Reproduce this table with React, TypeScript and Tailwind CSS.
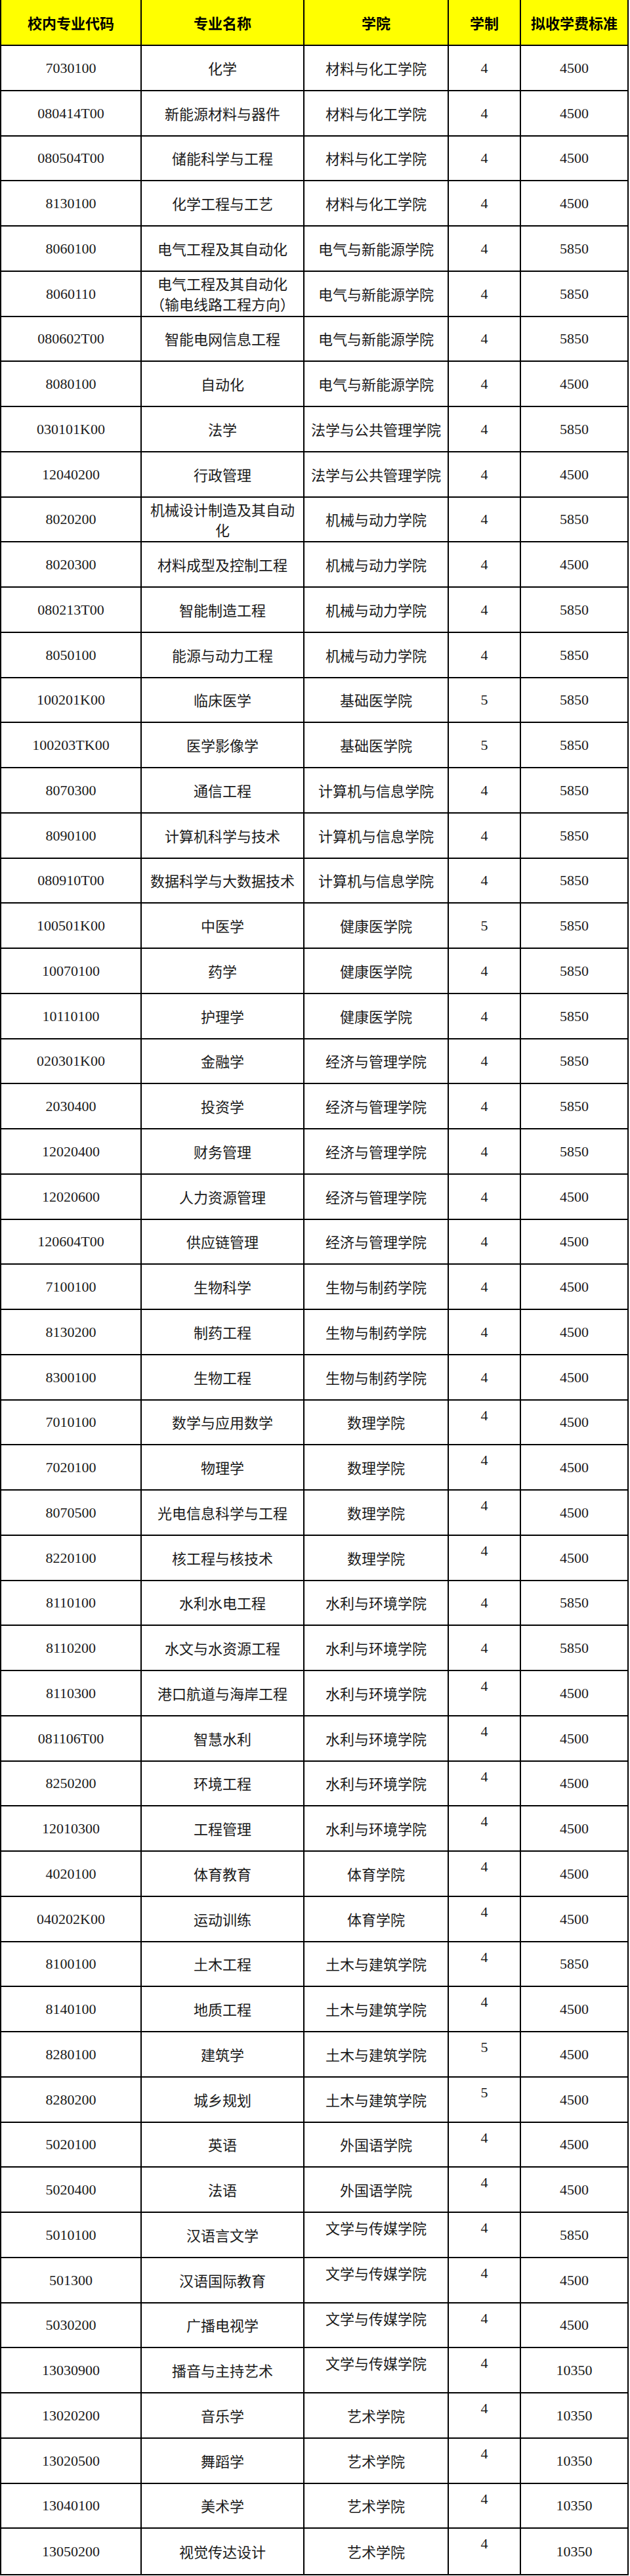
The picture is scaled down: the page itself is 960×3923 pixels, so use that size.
import React from "react";

type Row = { code: string; name: React.ReactNode; school: string; years: string; fee: string; topYears?: boolean; topSchool?: boolean };

const rows: Row[] = [
  { code: "7030100", name: "化学", school: "材料与化工学院", years: "4", fee: "4500" },
  { code: "080414T00", name: "新能源材料与器件", school: "材料与化工学院", years: "4", fee: "4500" },
  { code: "080504T00", name: "储能科学与工程", school: "材料与化工学院", years: "4", fee: "4500" },
  { code: "8130100", name: "化学工程与工艺", school: "材料与化工学院", years: "4", fee: "4500" },
  { code: "8060100", name: "电气工程及其自动化", school: "电气与新能源学院", years: "4", fee: "5850" },
  { code: "8060110", name: <>电气工程及其自动化<br />（输电线路工程方向）</>, school: "电气与新能源学院", years: "4", fee: "5850" },
  { code: "080602T00", name: "智能电网信息工程", school: "电气与新能源学院", years: "4", fee: "5850" },
  { code: "8080100", name: "自动化", school: "电气与新能源学院", years: "4", fee: "4500" },
  { code: "030101K00", name: "法学", school: "法学与公共管理学院", years: "4", fee: "5850" },
  { code: "12040200", name: "行政管理", school: "法学与公共管理学院", years: "4", fee: "4500" },
  { code: "8020200", name: <>机械设计制造及其自动<br />化</>, school: "机械与动力学院", years: "4", fee: "5850" },
  { code: "8020300", name: "材料成型及控制工程", school: "机械与动力学院", years: "4", fee: "4500" },
  { code: "080213T00", name: "智能制造工程", school: "机械与动力学院", years: "4", fee: "5850" },
  { code: "8050100", name: "能源与动力工程", school: "机械与动力学院", years: "4", fee: "5850" },
  { code: "100201K00", name: "临床医学", school: "基础医学院", years: "5", fee: "5850" },
  { code: "100203TK00", name: "医学影像学", school: "基础医学院", years: "5", fee: "5850" },
  { code: "8070300", name: "通信工程", school: "计算机与信息学院", years: "4", fee: "5850" },
  { code: "8090100", name: "计算机科学与技术", school: "计算机与信息学院", years: "4", fee: "5850" },
  { code: "080910T00", name: "数据科学与大数据技术", school: "计算机与信息学院", years: "4", fee: "5850" },
  { code: "100501K00", name: "中医学", school: "健康医学院", years: "5", fee: "5850" },
  { code: "10070100", name: "药学", school: "健康医学院", years: "4", fee: "5850" },
  { code: "10110100", name: "护理学", school: "健康医学院", years: "4", fee: "5850" },
  { code: "020301K00", name: "金融学", school: "经济与管理学院", years: "4", fee: "5850" },
  { code: "2030400", name: "投资学", school: "经济与管理学院", years: "4", fee: "5850" },
  { code: "12020400", name: "财务管理", school: "经济与管理学院", years: "4", fee: "5850" },
  { code: "12020600", name: "人力资源管理", school: "经济与管理学院", years: "4", fee: "4500" },
  { code: "120604T00", name: "供应链管理", school: "经济与管理学院", years: "4", fee: "4500" },
  { code: "7100100", name: "生物科学", school: "生物与制药学院", years: "4", fee: "4500" },
  { code: "8130200", name: "制药工程", school: "生物与制药学院", years: "4", fee: "4500" },
  { code: "8300100", name: "生物工程", school: "生物与制药学院", years: "4", fee: "4500" },
  { code: "7010100", name: "数学与应用数学", school: "数理学院", years: "4", fee: "4500", topYears: true },
  { code: "7020100", name: "物理学", school: "数理学院", years: "4", fee: "4500", topYears: true },
  { code: "8070500", name: "光电信息科学与工程", school: "数理学院", years: "4", fee: "4500", topYears: true },
  { code: "8220100", name: "核工程与核技术", school: "数理学院", years: "4", fee: "4500", topYears: true },
  { code: "8110100", name: "水利水电工程", school: "水利与环境学院", years: "4", fee: "5850" },
  { code: "8110200", name: "水文与水资源工程", school: "水利与环境学院", years: "4", fee: "5850" },
  { code: "8110300", name: "港口航道与海岸工程", school: "水利与环境学院", years: "4", fee: "4500", topYears: true },
  { code: "081106T00", name: "智慧水利", school: "水利与环境学院", years: "4", fee: "4500", topYears: true },
  { code: "8250200", name: "环境工程", school: "水利与环境学院", years: "4", fee: "4500", topYears: true },
  { code: "12010300", name: "工程管理", school: "水利与环境学院", years: "4", fee: "4500", topYears: true },
  { code: "4020100", name: "体育教育", school: "体育学院", years: "4", fee: "4500", topYears: true },
  { code: "040202K00", name: "运动训练", school: "体育学院", years: "4", fee: "4500", topYears: true },
  { code: "8100100", name: "土木工程", school: "土木与建筑学院", years: "4", fee: "5850", topYears: true },
  { code: "8140100", name: "地质工程", school: "土木与建筑学院", years: "4", fee: "4500", topYears: true },
  { code: "8280100", name: "建筑学", school: "土木与建筑学院", years: "5", fee: "4500", topYears: true },
  { code: "8280200", name: "城乡规划", school: "土木与建筑学院", years: "5", fee: "4500", topYears: true },
  { code: "5020100", name: "英语", school: "外国语学院", years: "4", fee: "4500", topYears: true },
  { code: "5020400", name: "法语", school: "外国语学院", years: "4", fee: "4500", topYears: true },
  { code: "5010100", name: "汉语言文学", school: "文学与传媒学院", years: "4", fee: "5850", topYears: true, topSchool: true },
  { code: "501300", name: "汉语国际教育", school: "文学与传媒学院", years: "4", fee: "4500", topYears: true, topSchool: true },
  { code: "5030200", name: "广播电视学", school: "文学与传媒学院", years: "4", fee: "4500", topYears: true, topSchool: true },
  { code: "13030900", name: "播音与主持艺术", school: "文学与传媒学院", years: "4", fee: "10350", topYears: true, topSchool: true },
  { code: "13020200", name: "音乐学", school: "艺术学院", years: "4", fee: "10350", topYears: true },
  { code: "13020500", name: "舞蹈学", school: "艺术学院", years: "4", fee: "10350", topYears: true },
  { code: "13040100", name: "美术学", school: "艺术学院", years: "4", fee: "10350", topYears: true },
  { code: "13050200", name: "视觉传达设计", school: "艺术学院", years: "4", fee: "10350", topYears: true },
];

const serif = "font-['Liberation_Serif','Times_New_Roman',serif]";
const cjk = "font-['Noto_Sans_CJK_SC','Noto_Sans',sans-serif]";

function Cell({ children, top, last, font }: { children: React.ReactNode; top?: boolean; last?: boolean; font: string }) {
  return (
    <div
      className={`flex justify-center text-center text-[22px] leading-[31px] text-[#1a1a1a] ${font} ${
        top ? "items-start pt-[7px]" : "items-center"
      } ${last ? "" : "border-r-2 border-black"}`}
    >
      <div>{children}</div>
    </div>
  );
}

export default function App() {
  const heads = ["校内专业代码", "专业名称", "学院", "学制", "拟收学费标准"];
  return (
    <div className="w-[960px] bg-white">
      <div className="w-[958px] border-x-2 border-b-2 border-black">
        <div className="grid h-[70px] grid-cols-[214px_248px_220px_110px_162px] border-b-2 border-black bg-[#ffff00]">
          {heads.map((h, i) => (
            <div
              key={h}
              className={`flex items-center justify-center text-[22px] font-bold text-black ${cjk} ${
                i < 4 ? "border-r-2 border-black" : ""
              }`}
            >
              {h}
            </div>
          ))}
        </div>
        {rows.map((r, i) => (
          <div
            key={r.code + i}
            className={`grid h-[68.75px] grid-cols-[214px_248px_220px_110px_162px] ${
              i < rows.length - 1 ? "border-b-2 border-black" : ""
            }`}
          >
            <Cell font={serif}>{r.code}</Cell>
            <Cell font={cjk}>{r.name}</Cell>
            <Cell font={cjk} top={r.topSchool}>{r.school}</Cell>
            <Cell font={serif} top={r.topYears}>{r.years}</Cell>
            <Cell font={serif} last>{r.fee}</Cell>
          </div>
        ))}
      </div>
    </div>
  );
}
